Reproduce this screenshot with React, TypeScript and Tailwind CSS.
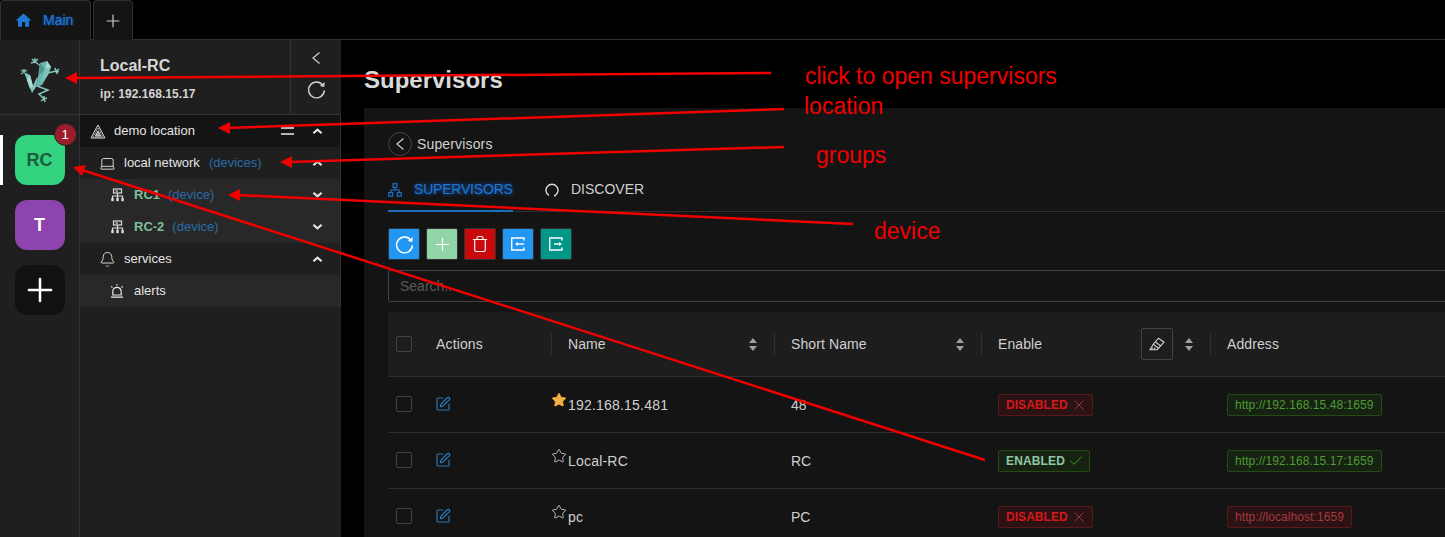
import { Bell, Check, Laptop, Plus, SquarePen, Star, Trash, X } from 'lucide-react';

const font = "font-['Liberation_Sans',Arial,sans-serif]";

const HomeIcon = () => (
  <svg viewBox="0 0 24 24" className="h-[19px] w-[19px] fill-[#1f78d1]">
    <path d="M10 20v-6h4v6h5v-8h3L12 3 2 12h3v8z" />
  </svg>
);

const Refresh = ({ className }: { className: string }) => (
  <svg viewBox="0 0 24 24" fill="none" stroke="currentColor" strokeWidth="1.6" className={className}>
    <path d="M19.500 7.500A9 9 0 1 0 21 13" />
    <path d="M21.500 3.500 20.800 9l-5-1z" fill="currentColor" stroke="none" />
  </svg>
);

const Chevron = ({ className }: { className: string }) => (
  <svg viewBox="0 0 8 12" fill="none" stroke="currentColor" strokeWidth="1.2" className={className}>
    <path d="M7.500.5 1 6l6.500 5.500" />
  </svg>
);

const Angle = ({ up }: { up?: boolean }) => (
  <svg viewBox="0 0 12 8" className="h-[8px] w-[11px]" fill="none" stroke="#e6e6e6" strokeWidth="2.2">
    <path d={up ? 'M1.500 6.500 6 2.500l4.500 4' : 'M1.500 1.500 6 5.500l4.500-4'} />
  </svg>
);

const DeviceIcon = () => (
  <svg viewBox="0 0 13 14" className="ml-px h-[14px] w-[13px]" fill="none" stroke="#dcdcdc" strokeWidth="1.2">
    <rect x="2.500" y="1" width="8" height="4" />
    <path d="M4.500 3h2.500" />
    <path d="M6.500 5v3M1.500 10V8h10v2M6.500 8v2" />
    <rect x="0.300" y="10" width="2.400" height="3.200" fill="#dcdcdc" stroke="none" />
    <rect x="5.300" y="10" width="2.400" height="3.200" fill="#dcdcdc" stroke="none" />
    <rect x="10.300" y="10" width="2.400" height="3.200" fill="#dcdcdc" stroke="none" />
  </svg>
);

const LocationIcon = () => (
  <svg viewBox="0 0 16 15" className="h-[15px] w-[16px]" fill="none" stroke="#d8d8d8" strokeWidth="1">
    <path d="M8 1 15 14H1z" />
    <path d="M8 4 13 13H3z" strokeDasharray="1 .6" />
    <path d="M8 7 10.600 12H5.400z" fill="#9a9a9a" />
  </svg>
);

const SirenIcon = () => (
  <svg viewBox="0 0 14 14" className="h-[14px] w-[14px]" fill="none" stroke="#ececec" strokeWidth="1.200">
    <path d="M2.800 11V7.500a4.200 4.200 0 0 1 8.400 0V11z" />
    <path d="M1 13.200h12M7 .3v1.400M1.200 2.300l1.300 1.300M12.800 2.300l-1.300 1.300" />
  </svg>
);

const DiscoverIcon = () => (
  <svg viewBox="0 0 14 14" className="h-[14px] w-[14px] shrink-0" fill="none" stroke="#d9d9d9" strokeWidth="1.400">
    <path d="M4 12.500A6 6 0 1 1 10 12.500" />
    <path d="M9 12.800h1.800" />
  </svg>
);

const NetworkIcon = () => (
  <svg viewBox="0 0 14 14" className="h-[14px] w-[14px] shrink-0" fill="none" stroke="#1f78d1" strokeWidth="1.100">
    <rect x="5" y="0.700" width="4" height="3.600" />
    <rect x="0.700" y="9.600" width="4" height="3.600" />
    <rect x="9.300" y="9.600" width="4" height="3.600" />
    <path d="M7 4.300V7M2.700 9.600V7h8.600v2.600" />
  </svg>
);

const BoxArrow = ({ out }: { out?: boolean }) => (
  <svg viewBox="0 0 16 14" className="h-[14px] w-[16px]" fill="none" stroke="#fff" strokeWidth="1.400">
    <path d="M14 3.500V1H1.700v12H14v-2.500" />
    <path d={out ? 'M6 7h6' : 'M7 7h7'} />
    <path d={out ? 'M11 5l3 2-3 2z' : 'M8 5 5 7l3 2z'} fill="#fff" stroke="none" />
  </svg>
);

const ClearIcon = () => (
  <svg viewBox="0 0 16 14" className="h-[14px] w-[16px]" fill="none" stroke="#cfcfcf" strokeWidth="1.100">
    <path d="M9.500 1.200 15 5.200l-5.500 6-5.200-4z" />
    <path d="M6.500 5 11.800 9" />
    <path d="M4.300 7.200 1 12.700h7.200l1.300-1.500" />
    <path d="M3.500 10.500 2.500 12.700M6 10.500l-1 2.200" />
  </svg>
);

const SortCarets = () => (
  <svg viewBox="0 0 8 13" className="h-[13px] w-[8px] fill-[#a0a0a0]">
    <path d="M4 0 8 5H0zM4 13 0 8h8z" />
  </svg>
);

const Frog = () => (
  <svg viewBox="0 0 40 46" className="mt-[5px] h-[46px] w-[40px]">
    <g stroke="#86c6bc" strokeWidth="1.500" fill="none">
      <path d="M21 9 15 5M15 5l-3-3M15 5l0-4M15 5l-4 1M15 5l3-3" />
      <path d="M28 16l8-2M36 14l3-2M36 14l3 1M36 14l1 3M36 14l-1-3" />
      <path d="M4 15 1 13M4 15l-3 2M4 15l0-3M4 15l3-2" />
      <path d="M17 29l11 4-9 4 5 5M24 42l3-1M24 42l1 3M24 42l-3 2M24 42l0-3" />
    </g>
    <path d="M20 6l7-2 4 6-3 8-6 10-6 2 2-10z" fill="#6db5ab" />
    <path d="M27 4l4 6-6 2z" fill="#a9dbd3" />
    <path d="M20 6l5 6-6 7z" fill="#4e9a91" />
    <path d="M25 12l6-2-3 8-7 8z" fill="#7fc4ba" />
    <path d="M4 15l6 3 3 11 3-7 2-2-2 10-4 6-5-13z" fill="#7fc4ba" />
    <path d="M10 18l3 11-3 3-3-9z" fill="#a9dbd3" />
  </svg>
);

const TreeRow = ({
  bg,
  pad,
  icon,
  label,
  extra,
  green,
  angle,
  menu,
}: {
  bg: string;
  pad: string;
  icon: React.ReactNode;
  label: string;
  extra?: string;
  green?: boolean;
  angle?: 'up' | 'down';
  menu?: boolean;
}) => (
  <div className={`flex h-[32px] items-center ${bg} ${pad} text-[13px] text-[#e4e4e4]`}>
    <div className="flex w-[20px] shrink-0 items-center">{icon}</div>
    <span className={`ml-[4px] ${green ? 'font-bold text-[#7fbf9b]' : ''}`}>{label}</span>
    {extra && <span className={`${green ? 'ml-[8px]' : 'ml-[9px]'} text-[#2a6ca8]`}>{extra}</span>}
    <div className="ml-auto flex items-center">
      {menu && (
        <div className="mr-[18px] flex flex-col gap-[4px]">
          <div className="h-[2px] w-[13px] bg-[#b8b8b8]" />
          <div className="h-[2px] w-[13px] bg-[#b8b8b8]" />
        </div>
      )}
      {angle && (
        <div className="mr-[17px]">
          <Angle up={angle === 'up'} />
        </div>
      )}
    </div>
  </div>
);

const tableCols = 'grid grid-cols-[48px_115px_223px_207px_229px_1fr]';

const Badge = ({ on }: { on: boolean }) =>
  on ? (
    <span className="inline-flex h-[22px] items-center gap-[3px] rounded-[2px] border border-[#274916] bg-[#162312] pl-[7px] pr-[5px] text-[12px] font-bold tracking-[0.15px] text-[#8fc7a5]">
      ENABLED <Check size={16} strokeWidth={1.300} className="text-[#49aa19]" />
    </span>
  ) : (
    <span className="inline-flex h-[22px] items-center gap-[3px] rounded-[2px] border border-[#58181c] bg-[#2a1215] pl-[7px] pr-[5px] text-[12px] font-bold tracking-[0.05px] text-[#d81818]">
      DISABLED <X size={16} strokeWidth={1.300} className="text-[#b03a3e]" />
    </span>
  );

const rows = [
  { name: '192.168.15.481', short: '48', on: false, addr: 'http://192.168.15.48:1659', ok: true, fav: true },
  { name: 'Local-RC', short: 'RC', on: true, addr: 'http://192.168.15.17:1659', ok: true, fav: false },
  { name: 'pc', short: 'PC', on: false, addr: 'http://localhost:1659', ok: false, fav: false },
];

const Checkbox = () => <div className="h-[16px] w-[16px] rounded-[2px] border border-[#434343]" />;

const ToolBtn = ({ bg, children }: { bg: string; children: React.ReactNode }) => (
  <button className={`flex h-[32px] w-[32px] items-center justify-center rounded-[2px] border border-[#333] text-white ${bg}`}>
    {children}
  </button>
);

const HeadCell = ({ label, extra, sort }: { label: string; extra?: React.ReactNode; sort?: boolean }) => (
  <div className="flex h-full items-center">
    <div className="h-[22px] w-px bg-[#303030]" />
    <span className="ml-4 tracking-[0.1px]">{label}</span>
    {(sort || extra) && (
      <div className="ml-auto mr-[17px] flex items-center gap-[12px]">
        {extra}
        <SortCarets />
      </div>
    )}
  </div>
);

export default function App() {
  return (
    <div className={`relative h-[537px] w-[1445px] overflow-hidden bg-black ${font}`}>
      {/* tabs */}
      <div className="flex h-[40px] gap-[2px] border-b border-[#303030]">
        <div className="flex h-[40px] w-[91px] items-center gap-[10px] rounded-t-[4px] border border-b-0 border-[#303030] bg-[#141414] pl-[13px]">
          <HomeIcon />
          <span className="text-[14px] text-[#1f78d1] [text-shadow:0_0_2px_#1668dc]">Main</span>
        </div>
        <div className="flex h-[40px] w-[40px] items-center justify-center rounded-t-[4px] border border-b-0 border-[#303030] bg-[#141414]">
          <Plus size={20} strokeWidth={1.400} className="text-[#cfcfcf]" />
        </div>
      </div>

      <div className="flex h-[497px]">
        {/* rail */}
        <div className="w-[80px] shrink-0 border-r border-[#333] bg-[#1f1f1f]">
          <div className="flex h-[75px] items-center justify-center border-b border-[#333]">
            <Frog />
          </div>
          <div className="relative flex flex-col items-center gap-[15px] pt-[20px]">
            <div className="absolute left-0 top-[20px] h-[50px] w-[3px] bg-white" />
            <div className="relative flex h-[50px] w-[50px] items-center justify-center rounded-[12px] bg-[#32d27f] text-[18px] font-bold text-[#1f5a3c]">
              RC
              <div className="absolute right-[-12px] top-[-12px] flex h-[23px] w-[23px] items-center justify-center rounded-full border border-[#222] bg-[#9b1c2a] text-[13px] font-normal text-white">
                1
              </div>
            </div>
            <div className="flex h-[50px] w-[50px] items-center justify-center rounded-[12px] bg-[#8e44ad] text-[18px] font-bold text-white">
              T
            </div>
            <div className="flex h-[50px] w-[50px] items-center justify-center rounded-[12px] bg-[#111] text-white">
              <Plus size={38} strokeWidth={1.600} />
            </div>
          </div>
        </div>

        {/* sidebar */}
        <div className="w-[261px] shrink-0 bg-[#1f1f1f]">
          <div className="flex h-[75px] border-b border-[#333]">
            <div className="flex-1 pl-[20px] pt-[16px] text-[#d6d6d6]">
              <div className="text-[16px] font-bold leading-[20px]">Local-RC</div>
              <div className="mt-[10px] text-[12px] font-bold leading-[16px] tracking-[0.05px]">ip: 192.168.15.17</div>
            </div>
            <div className="flex w-[51px] flex-col items-center border-l border-[#333] pt-[12px]">
              <Chevron className="h-[12px] w-[8px] text-[#d0d0d0]" />
              <Refresh className="mt-[15px] h-[21px] w-[21px] text-[#d0d0d0]" />
            </div>
          </div>
          <div className="border-r border-[#333]">
            <TreeRow bg="bg-[#141414]" pad="pl-[10px]" icon={<LocationIcon />} label="demo location" angle="up" menu />
            <TreeRow bg="bg-[#1f1f1f]" pad="pl-[20px]" icon={<Laptop size={17} strokeWidth={1.300} className="-ml-px" />} label="local network" extra="(devices)" angle="up" />
            <TreeRow bg="bg-[#282828]" pad="pl-[30px]" icon={<DeviceIcon />} label="RC1" extra="(device)" green angle="down" />
            <TreeRow bg="bg-[#282828]" pad="pl-[30px]" icon={<DeviceIcon />} label="RC-2" extra="(device)" green angle="down" />
            <TreeRow bg="bg-[#1f1f1f]" pad="pl-[20px]" icon={<Bell size={17} strokeWidth={1.300} className="-ml-px" />} label="services" angle="up" />
            <TreeRow bg="bg-[#282828]" pad="pl-[30px]" icon={<SirenIcon />} label="alerts" />
          </div>
        </div>

        {/* main */}
        <div className="min-w-0 flex-1 pl-[23px]">
          <h1 className="pt-[25px] text-[24px] font-bold leading-[30px] text-[#d9d9d9]">Supervisors</h1>
          <div className="mt-[13px] h-[500px] w-[1200px] bg-[#141414] pl-[24px] pt-[24px]">
            <div className="flex h-[24px] items-center gap-[5px] text-[14px] tracking-[0.15px] text-[#d0d0d0]">
              <div className="flex h-[24px] w-[24px] items-center justify-center rounded-full border border-[#434343]">
                <Chevron className="h-[12px] w-[8px]" />
              </div>
              Supervisors
            </div>

            <div className="mt-[16px] flex h-[40px] items-center border-b border-[#303030] pb-[4px] text-[14px]">
              <div className="relative flex h-[36px] w-[125px] items-center gap-[12px]">
                <NetworkIcon />
                <span className="tracking-[-0.2px] text-[#1f78d1] [text-shadow:0_0_4px_#1668dc]">SUPERVISORS</span>
                <div className="absolute bottom-[-4px] left-0 h-[2px] w-full bg-[#1f6fb8]" />
              </div>
              <div className="ml-[32px] flex items-center gap-[12px] text-[#d0d0d0]">
                <DiscoverIcon />
                DISCOVER
              </div>
            </div>

            <div className="mt-[16px] flex gap-[6px]">
              <ToolBtn bg="bg-[#2196f3]"><Refresh className="h-[21px] w-[21px]" /></ToolBtn>
              <ToolBtn bg="bg-[#90d4a8]"><Plus size={21} strokeWidth={1.400} /></ToolBtn>
              <ToolBtn bg="bg-[#c80a0a]"><Trash size={18} strokeWidth={1.500} /></ToolBtn>
              <ToolBtn bg="bg-[#2196f3]"><BoxArrow /></ToolBtn>
              <ToolBtn bg="bg-[#009688]"><BoxArrow out /></ToolBtn>
            </div>

            <div className="mt-[10px] flex h-[32px] items-center rounded-[2px] border border-[#434343] pl-[11px] text-[14px] text-[#5a5a5a]">
              Search...
            </div>

            <div className="mt-[10px] text-[14px] text-[#d0d0d0]">
              <div className={`${tableCols} h-[65px] items-center border-b border-[#303030] bg-[#1d1d1d]`}>
                <div className="pl-[8px]"><Checkbox /></div>
                <div className="tracking-[0.15px]">Actions</div>
                <HeadCell label="Name" sort />
                <HeadCell label="Short Name" sort />
                <HeadCell
                  label="Enable"
                  extra={
                    <div className="flex h-[32px] w-[32px] items-center justify-center rounded-[2px] border border-[#434343]">
                      <ClearIcon />
                    </div>
                  }
                />
                <HeadCell label="Address" />
              </div>
              {rows.map((r) => (
                <div key={r.name} className={`${tableCols} h-[56px] items-center border-b border-[#303030]`}>
                  <div className="-mt-px pl-[8px]"><Checkbox /></div>
                  <div>
                    <SquarePen size={16} strokeWidth={1.800} className="-ml-px -mt-px text-[#2a75b8]" />
                  </div>
                  <div className="flex items-start pt-[2px]">
                    {r.fav ? (
                      <Star size={16} strokeWidth={1.300} className="-mt-[3px] fill-[#f5b041] text-[#f5b041]" />
                    ) : (
                      <Star size={16} strokeWidth={1.300} className="-mt-[3px] text-[#d0d0d0]" />
                    )}
                    <span className="ml-px tracking-[0.2px]">{r.name}</span>
                  </div>
                  <div className="pl-[17px] pt-[2px]">{r.short}</div>
                  <div className="pl-[17px]"><Badge on={r.on} /></div>
                  <div className="pl-[17px]">
                    <span
                      className={`inline-flex h-[22px] items-center rounded-[2px] border px-[7px] text-[12px] tracking-[0.07px] ${
                        r.ok ? 'border-[#274916] bg-[#162312] text-[#4f9a34]' : 'border-[#58181c] bg-[#2a1215] text-[#a83a3f]'
                      }`}
                    >
                      {r.addr}
                    </span>
                  </div>
                </div>
              ))}
            </div>
          </div>
        </div>
      </div>

      {/* annotations drawn on top of the screenshot */}
      <svg className="pointer-events-none absolute left-0 top-0 h-[537px] w-[1445px]" viewBox="0 0 1445 537">
        <g stroke="#f00000" strokeWidth="2.500" fill="none">
          <path d="M771 73 74 78" />
          <path d="M784 109 227 128" />
          <path d="M784 147 289 162" />
          <path d="M853 224 237 195" />
          <path d="M985 460 82 170" />
        </g>
        <g fill="#f00000">
          <path d="M65 78 77 72v12z" />
          <path d="M218 128 230 122v12z" />
          <path d="M280 162 292 156v12z" />
          <path d="M228 195 240 189v12z" />
          <path d="M73 167 86 165 82 176z" />
        </g>
      </svg>
      <div className="absolute left-[805px] top-[61px] text-[23px] leading-[30px] text-[#f00000]">click to open supervisors</div>
      <div className="absolute left-[804px] top-[91px] text-[23px] leading-[30px] text-[#f00000]">location</div>
      <div className="absolute left-[816px] top-[140px] text-[23px] leading-[30px] text-[#f00000]">groups</div>
      <div className="absolute left-[874px] top-[216px] text-[23px] leading-[30px] text-[#f00000]">device</div>
    </div>
  );
}
